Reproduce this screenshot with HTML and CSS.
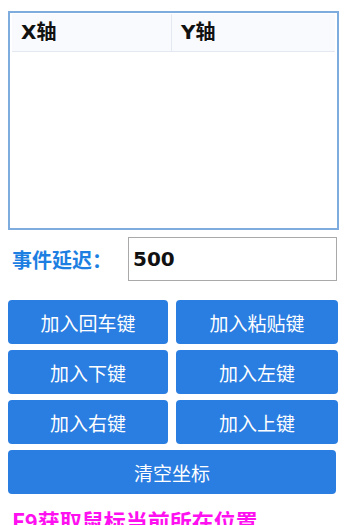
FILE: index.html
```html
<!DOCTYPE html>
<html>
<head>
<meta charset="utf-8">
<link rel="stylesheet" href="styles.css">
</head>
<body>
<div class="app">
  <div class="table">
    <div class="thead">
      <div class="th th-first">X轴</div>
      <div class="th">Y轴</div>
    </div>
  </div>
  <div class="delay-row">
    <span class="delay-label">事件延迟：</span>
    <div class="delay-input">500</div>
  </div>
  <div class="btn-grid">
    <div class="btn">加入回车键</div>
    <div class="btn">加入粘贴键</div>
    <div class="btn">加入下键</div>
    <div class="btn">加入左键</div>
    <div class="btn">加入右键</div>
    <div class="btn">加入上键</div>
  </div>
  <div class="btn btn-wide">清空坐标</div>
  <div class="hint">F9获取鼠标当前所在位置</div>
</div>
</body>
</html>
```
FILE: styles.css
```css
html, body {
  margin: 0;
  padding: 0;
  background: #ffffff;
}
body {
  width: 350px;
  height: 525px;
  overflow: hidden;
  font-family: "Noto Sans CJK SC", "Noto Sans", sans-serif;
}
.app {
  padding: 11px 0 0 8px;
}
.table {
  box-sizing: border-box;
  width: 331px;
  height: 219px;
  border: 2px solid #7eacdf;
  padding: 1px 2px;
}
.thead {
  display: flex;
  height: 37px;
  background: #f8fafd;
  border-bottom: 1px solid #e4e9f1;
}
.th {
  flex: 1;
  box-sizing: border-box;
  padding-left: 9px;
  font-family: "DejaVu Sans", "Noto Sans CJK SC", sans-serif;
  font-weight: bold;
  font-size: 20px;
  line-height: 37px;
  color: #111;
}
.th-first {
  flex: 0 0 160px;
  border-right: 1px solid #e4e9f1;
}
.delay-row {
  display: flex;
  align-items: center;
  margin-top: 7px;
  height: 44px;
}
.delay-label {
  margin-left: 4px;
  width: 116px;
  font-size: 20px;
  font-weight: bold;
  color: #1d7fe2;
}
.delay-input {
  box-sizing: border-box;
  width: 209px;
  height: 44px;
  border: 1px solid #a9a9a9;
  padding-left: 4px;
  font-family: "DejaVu Sans", sans-serif;
  font-weight: bold;
  font-size: 20px;
  line-height: 42px;
  color: #111;
}
.btn-grid {
  display: grid;
  grid-template-columns: 160px 162px;
  column-gap: 8px;
  row-gap: 6px;
  margin-top: 19px;
}
.btn {
  height: 44px;
  background: #2a7de1;
  border-radius: 4px;
  color: #ffffff;
  font-size: 19px;
  display: flex;
  align-items: center;
  justify-content: center;
}
.btn-wide {
  width: 328px;
  margin-top: 6px;
}
.hint {
  margin-top: 12px;
  margin-left: 4px;
  font-size: 22px;
  font-weight: bold;
  color: #ff10f0;
  line-height: 28px;
  white-space: nowrap;
}
```
